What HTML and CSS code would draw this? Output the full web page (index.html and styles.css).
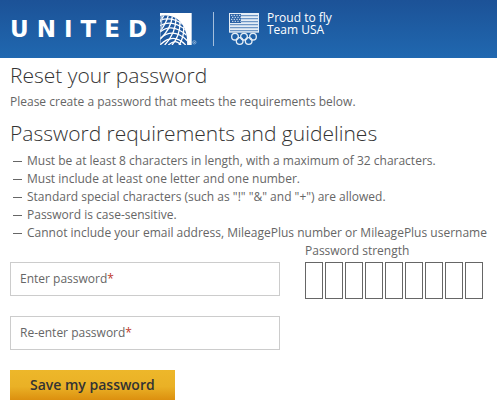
FILE: index.html
```html
<!DOCTYPE html>
<html lang="en">
<head>
<meta charset="utf-8">
<title>Reset your password</title>
<link rel="stylesheet" href="styles.css">
</head>
<body>
<header class="banner">
  <div class="brand">
    <span class="wordmark">UNITED</span>
    <svg class="globe" viewBox="0 0 111 96" aria-hidden="true">
      <defs><clipPath id="sphere"><path d="M0 9Q24 3 47 15Q82 36 82 96H0Z"/></clipPath></defs>
      <path fill="#fff" d="M0 0H95V96H0Z"/>
      <g clip-path="url(#sphere)">
        <path fill="#2059a0" d="M0 0H95V96H0Z"/>
        <g fill="none" stroke="#fff" stroke-width="4">
          <path d="M0 22Q34 9 69 34M0 38Q37 18 77 51M0 57Q36 28 80 67M0 77Q39 41 82 83M0 96Q40 56 77 96M25 96Q47 76 63 96"/>
          <path d="M13 5Q5 18 0 27M26 4Q17 35 0 55M37 10Q33 47 0 79M48 15Q48 61 14 96M60 25Q61 67 36 96M71 40Q73 72 57 96"/>
        </g>
        <path d="M0 8V96M5 7V50" stroke="#bdd0e5" stroke-width="3"/>
      </g>
      <circle cx="103" cy="88" r="5" fill="none" stroke="#a9c4e2" stroke-width="2"/>
      <circle cx="103" cy="88" r="2" fill="#a9c4e2"/>
    </svg>
  </div>
  <div class="partner">
    <svg class="flag" viewBox="0 0 90 99" aria-hidden="true">
      <path fill="#e4edf6" d="M0 0H90V59H0Z"/>
      <path d="M34 8H87M34 17H87M34 26H87M3 35H87M3 44H87M3 53H87" stroke="#6e96c5" stroke-width="4"/>
      <path fill="#2b62a6" d="M3 3H36V30H3Z"/>
      <path d="M6 7H35M9 13H35M6 19H35M9 25H35" stroke="#dce8f4" stroke-width="3" stroke-dasharray="4 4"/>
      <g fill="none" stroke="#e4edf6" stroke-width="4">
        <circle cx="18" cy="71" r="10"/><circle cx="45" cy="71" r="10"/><circle cx="72" cy="71" r="10"/>
        <circle cx="32" cy="84" r="10"/><circle cx="59" cy="84" r="10"/>
      </g>
    </svg>
    <p class="tagline">Proud to fly<br>Team USA</p>
  </div>
</header>
<main class="content">
  <h1 class="heading">Reset your password</h1>
  <p class="intro">Please create a password that meets the requirements below.</p>
  <h2 class="heading">Password requirements and guidelines</h2>
  <ul class="rules">
    <li>Must be at least 8 characters in length, with a maximum of 32 characters.</li>
    <li>Must include at least one letter and one number.</li>
    <li>Standard special characters (such as "!" "&amp;" and "+") are allowed.</li>
    <li>Password is case-sensitive.</li>
    <li>Cannot include your email address, MileagePlus number or MileagePlus username</li>
  </ul>
  <form class="form">
    <div class="fields">
      <div class="field">
        <input id="password" type="password" required>
        <label for="password">Enter password<span class="required">*</span></label>
      </div>
      <div class="field">
        <input id="confirm" type="password" required>
        <label for="confirm">Re-enter password<span class="required">*</span></label>
      </div>
      <button class="save" type="submit">Save my password</button>
    </div>
    <div class="strength">
      <p>Password strength</p>
      <div class="meter">
        <span></span><span></span><span></span><span></span><span></span><span></span><span></span><span></span><span></span>
      </div>
    </div>
  </form>
</main>
</body>
</html>
```
FILE: styles.css
```css
* {
  box-sizing: border-box;
}

body,
h1,
h2,
p,
ul {
  margin: 0;
}

body {
  background: #fff;
  color: #666;
  font: 12px/18px "Open Sans", sans-serif;
}

.banner {
  display: flex;
  align-items: flex-start;
  height: 58px;
  padding: 12px 10px 0;
  background: linear-gradient(#1c5297, #2068b0);
  color: #fff;
}

.brand {
  display: flex;
  align-items: center;
  padding-top: 1px;
}

.wordmark {
  width: 150px;
  font: 700 23px/32px "DejaVu Sans", sans-serif;
  letter-spacing: 8px;
}

.globe {
  width: 37px;
  height: 32px;
}

.partner {
  display: flex;
  margin-left: 16px;
  padding-left: 15px;
  border-left: 1px solid #a5bfdc;
}

.flag {
  width: 30px;
  height: 33px;
  margin-top: 1px;
}

.tagline {
  padding-left: 8px;
  font-size: 12px;
  line-height: 12px;
}

.content {
  padding: 3px 5px 5px 10px;
}

.heading {
  color: #333;
  font-size: 21px;
  font-weight: 300;
  line-height: 28px;
}

.intro {
  padding: 4px 0 8px;
}

.rules {
  padding: 5px 0 0;
  list-style: none;
}

.rules li {
  display: flex;
  align-items: center;
  gap: 5px;
  padding-left: 3px;
  white-space: nowrap;
}

.rules li::before {
  width: 9px;
  height: 1px;
  background: #666;
  content: "";
}

.form {
  display: flex;
  align-items: flex-start;
  gap: 25px;
}

.fields {
  display: flex;
  flex: 0 1 270px;
  flex-direction: column;
  align-items: flex-start;
  gap: 20px;
  padding-top: 20px;
}

.field {
  display: grid;
  width: 100%;
  align-items: center;
}

.field input,
.field label {
  grid-area: 1 / 1;
}

.field input {
  width: 100%;
  height: 34px;
  padding: 0 9px;
  border: 1px solid #ccc;
  background: #fff;
  font: inherit;
}

.field label {
  padding-left: 10px;
  pointer-events: none;
}

.field input:valid + label {
  visibility: hidden;
}

.required {
  color: #c0392b;
}

.save {
  height: 30px;
  padding: 0 20px;
  border: 0;
  background: linear-gradient(#edb72a, #eab126 55%, #dc900f);
  color: #333;
  font: 600 14px/30px "Open Sans", sans-serif;
}

.meter {
  display: flex;
  gap: 2px;
  padding-top: 2px;
}

.meter span {
  width: 18px;
  height: 37px;
  border: 1px solid #666;
}
```
